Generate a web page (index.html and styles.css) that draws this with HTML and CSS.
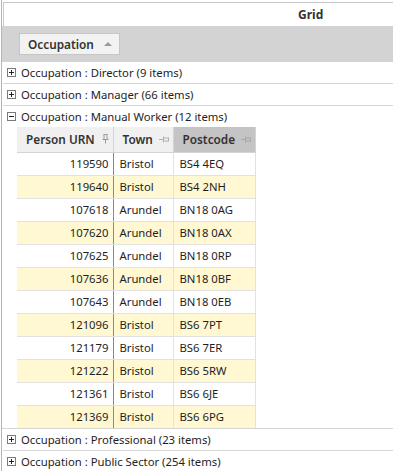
FILE: index.html
```html
<!DOCTYPE html>
<html lang="en">
<head>
  <meta charset="UTF-8">
  <title>Grid</title>
  <link rel="stylesheet" href="styles.css">
</head>
<body>

  <div class="grid">
    <div class="title">Grid</div>

    <div class="group-panel">
      <span class="group-btn">Occupation <span class="sort-up"></span></span>
    </div>

    <div class="group-row"><span class="toggle"></span>Occupation : Director (9 items)</div>
    <div class="group-row"><span class="toggle"></span>Occupation : Manager (66 items)</div>
    <div class="group-row open"><span class="toggle"></span>Occupation : Manual Worker (12 items)</div>

    <div class="detail">
      <table>
        <thead>
          <tr>
            <th class="col-urn"><div class="head">Person URN
              <svg class="pin" width="7" height="10" viewBox="0 0 7 10"><path d="M1.5 0.5h4M2 0.5v5M5 0.5v5M0.5 5.5h6M3.5 5.5v4" fill="none" stroke="#9a9a9a" stroke-width="1"/></svg>
            </div></th>
            <th class="col-town"><div class="head">Town
              <svg class="pin" width="10" height="7" viewBox="0 0 10 7"><path d="M0 3.5h4M4.5 0.5v6M4.5 2h5M4.5 5h5M9.5 1.5v4" fill="none" stroke="#b0b0b0" stroke-width="1"/></svg>
            </div></th>
            <th class="col-post sorted"><div class="head">Postcode
              <svg class="pin" width="10" height="7" viewBox="0 0 10 7"><path d="M0 3.5h4M4.5 0.5v6M4.5 2h5M4.5 5h5M9.5 1.5v4" fill="none" stroke="#a8a8a8" stroke-width="1"/></svg>
            </div></th>
          </tr>
        </thead>
        <tbody>
          <tr><td class="num">119590</td><td>Bristol</td><td>BS4 4EQ</td></tr>
          <tr><td class="num">119640</td><td>Bristol</td><td>BS4 2NH</td></tr>
          <tr><td class="num">107618</td><td>Arundel</td><td>BN18 0AG</td></tr>
          <tr><td class="num">107620</td><td>Arundel</td><td>BN18 0AX</td></tr>
          <tr><td class="num">107625</td><td>Arundel</td><td>BN18 0RP</td></tr>
          <tr><td class="num">107636</td><td>Arundel</td><td>BN18 0BF</td></tr>
          <tr><td class="num">107643</td><td>Arundel</td><td>BN18 0EB</td></tr>
          <tr><td class="num">121096</td><td>Bristol</td><td>BS6 7PT</td></tr>
          <tr><td class="num">121179</td><td>Bristol</td><td>BS6 7ER</td></tr>
          <tr><td class="num">121222</td><td>Bristol</td><td>BS6 5RW</td></tr>
          <tr><td class="num">121361</td><td>Bristol</td><td>BS6 6JE</td></tr>
          <tr><td class="num">121369</td><td>Bristol</td><td>BS6 6PG</td></tr>
        </tbody>
      </table>
    </div>

    <div class="group-row"><span class="toggle"></span>Occupation : Professional (23 items)</div>
    <div class="group-row"><span class="toggle"></span>Occupation : Public Sector (254 items)</div>
  </div>

</body>
</html>
```

FILE: styles.css
```css
html, body { margin: 0; padding: 0; overflow: hidden; background: #fff; }
body { font-family: "Noto Sans", "Open Sans", sans-serif; font-size: 11.3px; color: #1e1e1e; }

.grid { padding-top: 2px; border-left: 1px solid #b4b4b4; margin-left: 1px; }

.title { height: 23px; line-height: 23px; margin-left: 1px; padding-left: 294px; border-top: 1px solid #c8c8c8; border-left: 1px solid #c8c8c8; font-weight: bold; font-size: 12px; color: #333; }

.group-panel { height: 36px; background: #d3d3d3; display: flex; align-items: center; padding-left: 17px; }
.group-btn { display: inline-flex; align-items: center; height: 20px; padding: 0 7px 0 8px; background: #f2f2f2; border: 1px solid #c6c6c6; font-weight: 600; font-size: 11.8px; color: #333; }
.sort-up { width: 0; height: 0; margin-left: 10px; border-left: 4px solid transparent; border-right: 4px solid transparent; border-bottom: 4px solid #9a9a9a; }

.group-row { display: flex; align-items: center; height: 21px; border-bottom: 1px solid #d6d6d6; margin-left: 1px; padding-left: 4px; }
.toggle { position: relative; width: 7px; height: 7px; border: 1px solid #7a7a7a; margin-right: 5px; background: #fff; }
.toggle::before { content: ""; position: absolute; left: 1px; top: 3px; width: 5px; height: 1px; background: #222; }
.toggle::after { content: ""; position: absolute; left: 3px; top: 1px; width: 1px; height: 5px; background: #222; }
.group-row.open { border-bottom: none; }
.group-row.open .toggle::after { display: none; }

.detail { padding-left: 15px; border-bottom: 1px solid #d6d6d6; }
.detail table { border-collapse: collapse; table-layout: fixed; width: 238px; }
.detail th { box-sizing: border-box; height: 25px; padding: 0 4px 0 9px; text-align: left; font-weight: 600; font-size: 11.8px; color: #333; background: #f0f0f0; border-right: 1px solid #d4d4d4; border-bottom: 1px solid #d4d4d4; white-space: nowrap; }
.detail th.sorted { background: #c4c4c4; }
.head { display: flex; align-items: center; justify-content: space-between; }
.col-urn { width: 96px; }
.col-town { width: 60px; padding-left: 8px; }
.col-post { width: 82px; padding-left: 9px; }

.detail td { height: 22px; padding: 0 6px; border-bottom: 1px solid #e2e2e2; border-right: 1px solid #e2e2e2; white-space: nowrap; overflow: hidden; }
.detail td.num { text-align: right; padding-right: 4px; border-right: 1px solid #8a8a8a; }
.detail tbody tr:nth-child(even) td { background: #fff8d2; }
.detail tbody tr:last-child td { border-bottom: none; }
```
